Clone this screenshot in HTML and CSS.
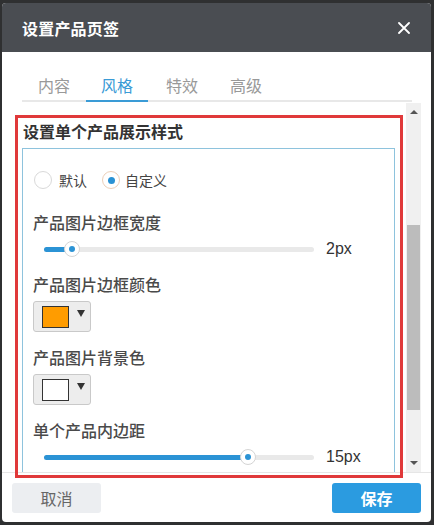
FILE: index.html
```html
<!DOCTYPE html>
<html lang="zh-CN">
<head>
<meta charset="utf-8">
<title>设置产品页签</title>
<link rel="stylesheet" href="styles.css">
</head>
<body>
<div class="dialog">
  <div class="header">
    <span class="title">设置产品页签</span>
    <svg class="close" width="12" height="12" viewBox="0 0 12 12"><path d="M1 1L11 11M11 1L1 11" stroke="#fff" stroke-width="1.8" stroke-linecap="round"/></svg>
  </div>
  <div class="tabs">
    <div class="tab">内容</div>
    <div class="tab active">风格</div>
    <div class="tab">特效</div>
    <div class="tab">高级</div>
  </div>
  <div class="panel">
    <div class="scroll-content">
      <div class="section-title">设置单个产品展示样式</div>
      <div class="box">
        <div class="radios">
          <span class="radio"></span><span class="radio-label">默认</span>
          <span class="radio checked"></span><span class="radio-label">自定义</span>
        </div>
        <div class="label first">产品图片边框宽度</div>
        <div class="slider-row">
          <div class="track"><div class="fill" style="width:28px"></div><div class="thumb" style="left:28px"></div></div>
          <span class="value">2px</span>
        </div>
        <div class="label">产品图片边框颜色</div>
        <div class="color-btn"><span class="swatch orange"></span><span class="caret"></span></div>
        <div class="label">产品图片背景色</div>
        <div class="color-btn"><span class="swatch white"></span><span class="caret"></span></div>
        <div class="label">单个产品内边距</div>
        <div class="slider-row">
          <div class="track"><div class="fill" style="width:204px"></div><div class="thumb" style="left:204px"></div></div>
          <span class="value">15px</span>
        </div>
      </div>
    </div>
    <div class="scrollbar">
      <span class="arrow up"></span>
      <div class="thumb-bar"></div>
      <span class="arrow down"></span>
    </div>
  </div>
  <div class="footer">
    <button class="btn cancel">取消</button>
    <button class="btn save">保存</button>
  </div>
  <div class="highlight"></div>
</div>
</body>
</html>
```

FILE: styles.css
```css
* { box-sizing: border-box; }
html, body { margin: 0; padding: 0; }
body {
  background: #2f3031;
  font-family: "Liberation Sans", "Noto Sans CJK SC", sans-serif;
  width: 434px;
  height: 525px;
  overflow: hidden;
}
.dialog {
  position: relative;
  margin: 3px 3px 0 2px;
  width: 429px;
  height: 519px;
  background: #fff;
  border-radius: 4px;
  overflow: hidden;
  display: flex;
  flex-direction: column;
}
.header {
  height: 49px;
  flex: none;
  background: #4a4d52;
  display: flex;
  align-items: center;
  justify-content: space-between;
  padding: 0 21px 0 20px;
}
.title {
  color: #fff;
  font-size: 16px;
  font-weight: bold;
  letter-spacing: 0.2px;
}
.close { display: block; }
.tabs {
  flex: none;
  margin: 22px 19px 0 20px;
  display: flex;
  border-bottom: 2px solid #e8e8e8;
}
.tab {
  width: 64px;
  text-align: center;
  font-size: 16px;
  line-height: 26px;
  color: #999;
}
.tab.active {
  color: #3a9bd6;
  border-bottom: 2px solid #3a9bd6;
  margin-bottom: -2px;
  width: 62px;
  margin-right: 2px;
}
.panel {
  flex: none;
  margin-top: 1px;
  height: 369px;
  display: flex;
}
.scroll-content {
  flex: 1;
  overflow: hidden;
  padding: 19px 11px 0 20px;
}
.section-title {
  font-size: 16px;
  line-height: 22px;
  font-weight: bold;
  color: #333;
  padding-left: 1px;
}
.box {
  margin-top: 4px;
  border: 1px solid #8ec3dd;
  border-bottom: none;
  padding: 21px 10px 0 10px;
  height: 400px;
}
.radios {
  display: flex;
  align-items: center;
  height: 20px;
  padding-left: 1px;
}
.radio {
  width: 18px;
  height: 18px;
  border: 1px solid #d9d9d9;
  border-radius: 50%;
  display: flex;
  align-items: center;
  justify-content: center;
}
.radio.checked { border-color: #eccfb8; }
.radio.checked::after {
  content: "";
  width: 7px;
  height: 7px;
  border-radius: 50%;
  background: #2a92d4;
}
.radio-label {
  font-size: 14px;
  color: #444;
  margin: 0 15px 0 7px;
}
.radio-label:last-child { margin: 0 0 0 5px; }
.label {
  font-size: 16px;
  line-height: 22px;
  color: #4a4a4a;
  font-weight: 500;
  margin-top: 16px;
}
.label.first { margin-top: 23px; }
.slider-row {
  margin-top: 4px;
  height: 20px;
  display: flex;
  align-items: center;
  padding-left: 11px;
}
.track {
  position: relative;
  width: 270px;
  height: 5px;
  background: #e9e9e9;
  border-radius: 3px;
}
.fill {
  height: 5px;
  background: #2b93d5;
  border-radius: 3px;
}
.thumb {
  position: absolute;
  top: 50%;
  width: 16px;
  height: 16px;
  margin: -8px 0 0 -8px;
  background: #fff;
  border: 1px solid #d4d4d4;
  border-radius: 50%;
  display: flex;
  align-items: center;
  justify-content: center;
}
.thumb::after {
  content: "";
  width: 6px;
  height: 6px;
  border-radius: 50%;
  background: #2b93d5;
}
.value {
  margin-left: 12px;
  font-size: 16px;
  color: #333;
}
.color-btn {
  margin-top: 4px;
  width: 58px;
  height: 31px;
  border: 1px solid #c9c9c9;
  border-radius: 3px;
  background: #ededed;
  display: flex;
  align-items: center;
  padding-left: 8px;
}
.label + .color-btn + .label { margin-top: 16px; }
.swatch {
  width: 27px;
  height: 22px;
  border: 1px solid #333;
}
.swatch.orange { background: #ff9c00; }
.swatch.white { background: #fff; }
.caret {
  margin-left: 8px;
  margin-top: -6px;
  width: 0;
  height: 0;
  border-left: 4px solid transparent;
  border-right: 4px solid transparent;
  border-top: 7px solid #333;
}
.scrollbar {
  flex: none;
  width: 15px;
  margin-right: 10px;
  background: #f0f0f0;
  position: relative;
}
.arrow {
  position: absolute;
  left: 4px;
  width: 0;
  height: 0;
  border-left: 4px solid transparent;
  border-right: 4px solid transparent;
}
.arrow.up { top: 7px; border-bottom: 4px solid #555; }
.arrow.down { bottom: 7px; border-top: 4px solid #555; }
.thumb-bar {
  position: absolute;
  left: 1px;
  right: 1px;
  top: 122px;
  height: 185px;
  background: #bcbcbc;
}
.footer {
  flex: none;
  border-top: 1px solid #e6e6e6;
  padding: 10px 10px 0 10px;
  display: flex;
  justify-content: space-between;
}
.btn {
  width: 89px;
  height: 30px;
  border: none;
  border-radius: 3px;
  font-family: inherit;
  font-size: 16px;
  padding: 0;
}
.cancel { background: #eceef1; color: #666; }
.save { background: #2b9be0; color: #fff; font-weight: bold; }
.highlight {
  position: absolute;
  left: 13px;
  top: 112px;
  width: 388px;
  height: 363px;
  border: 3px solid #e0393a;
  pointer-events: none;
}
```
